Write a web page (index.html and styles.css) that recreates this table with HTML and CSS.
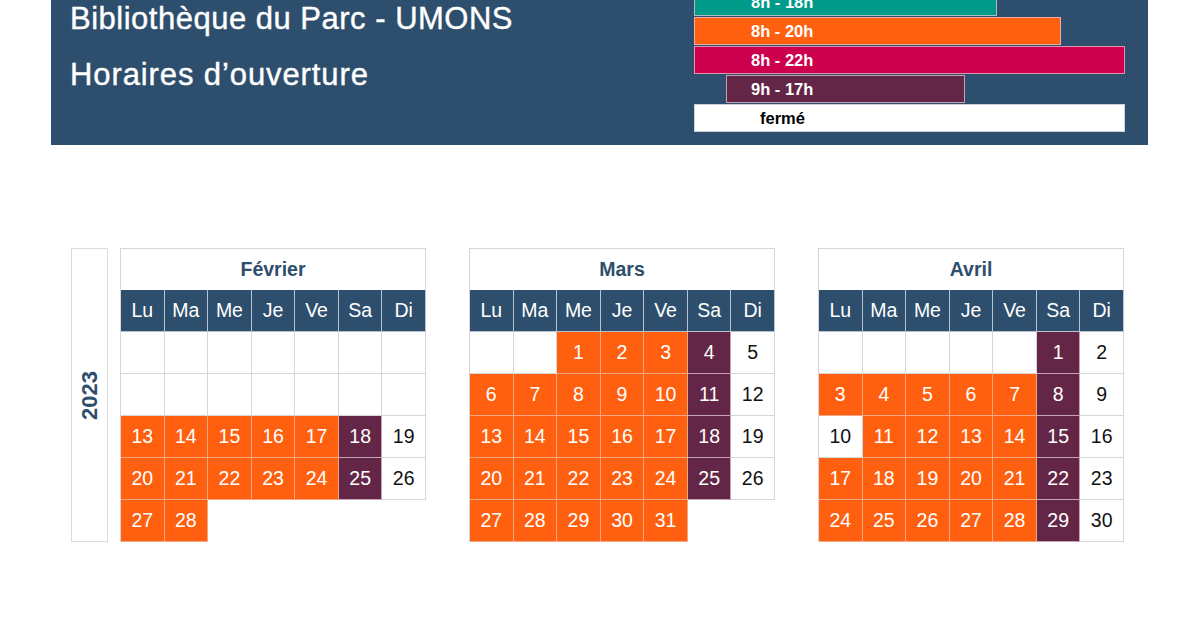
FILE: index.html
```html
<html>

<head>
    <meta charset="utf-8">
    <link rel="stylesheet" href="styles.css">
</head>

<body>
    <div class="banner">
        <div class="titles">
            <h1>Bibliothèque du Parc - UMONS</h1>
            <h2>Horaires d’ouverture</h2>
        </div>
        <div class="legend">
            <div class="bar teal" style="width: 303px">8h - 18h</div>
            <div class="bar orange" style="width: 367px">8h - 20h</div>
            <div class="bar crimson" style="width: 431px">8h - 22h</div>
            <div class="bar purple" style="margin-left: 32px; width: 239px">9h - 17h</div>
            <div class="bar closed" style="width: 431px">fermé</div>
        </div>
    </div>

    <div class="calendars">
        <div class="year"><span>2023</span></div>

        <!-- Février -->
        <div class="month">
            <div class="month-name">Février</div>
            <div class="grid">
                <div class="day-name">Lu</div><div class="day-name">Ma</div><div class="day-name">Me</div><div class="day-name">Je</div><div class="day-name">Ve</div><div class="day-name">Sa</div><div class="day-name">Di</div>
                <div class="cell"></div><div class="cell"></div><div class="cell"></div><div class="cell"></div><div class="cell"></div><div class="cell"></div><div class="cell"></div>
                <div class="cell"></div><div class="cell"></div><div class="cell"></div><div class="cell"></div><div class="cell"></div><div class="cell"></div><div class="cell"></div>
                <div class="cell o">13</div><div class="cell o">14</div><div class="cell o">15</div><div class="cell o">16</div><div class="cell o">17</div><div class="cell p">18</div><div class="cell">19</div>
                <div class="cell o">20</div><div class="cell o">21</div><div class="cell o">22</div><div class="cell o">23</div><div class="cell o">24</div><div class="cell p">25</div><div class="cell">26</div>
                <div class="cell o">27</div><div class="cell o">28</div>
            </div>
        </div>

        <!-- Mars -->
        <div class="month">
            <div class="month-name">Mars</div>
            <div class="grid">
                <div class="day-name">Lu</div><div class="day-name">Ma</div><div class="day-name">Me</div><div class="day-name">Je</div><div class="day-name">Ve</div><div class="day-name">Sa</div><div class="day-name">Di</div>
                <div class="cell"></div><div class="cell"></div><div class="cell o">1</div><div class="cell o">2</div><div class="cell o">3</div><div class="cell p">4</div><div class="cell">5</div>
                <div class="cell o">6</div><div class="cell o">7</div><div class="cell o">8</div><div class="cell o">9</div><div class="cell o">10</div><div class="cell p">11</div><div class="cell">12</div>
                <div class="cell o">13</div><div class="cell o">14</div><div class="cell o">15</div><div class="cell o">16</div><div class="cell o">17</div><div class="cell p">18</div><div class="cell">19</div>
                <div class="cell o">20</div><div class="cell o">21</div><div class="cell o">22</div><div class="cell o">23</div><div class="cell o">24</div><div class="cell p">25</div><div class="cell">26</div>
                <div class="cell o">27</div><div class="cell o">28</div><div class="cell o">29</div><div class="cell o">30</div><div class="cell o">31</div>
            </div>
        </div>

        <!-- Avril -->
        <div class="month">
            <div class="month-name">Avril</div>
            <div class="grid">
                <div class="day-name">Lu</div><div class="day-name">Ma</div><div class="day-name">Me</div><div class="day-name">Je</div><div class="day-name">Ve</div><div class="day-name">Sa</div><div class="day-name">Di</div>
                <div class="cell"></div><div class="cell"></div><div class="cell"></div><div class="cell"></div><div class="cell"></div><div class="cell p">1</div><div class="cell">2</div>
                <div class="cell o">3</div><div class="cell o">4</div><div class="cell o">5</div><div class="cell o">6</div><div class="cell o">7</div><div class="cell p">8</div><div class="cell">9</div>
                <div class="cell">10</div><div class="cell o">11</div><div class="cell o">12</div><div class="cell o">13</div><div class="cell o">14</div><div class="cell p">15</div><div class="cell">16</div>
                <div class="cell o">17</div><div class="cell o">18</div><div class="cell o">19</div><div class="cell o">20</div><div class="cell o">21</div><div class="cell p">22</div><div class="cell">23</div>
                <div class="cell o">24</div><div class="cell o">25</div><div class="cell o">26</div><div class="cell o">27</div><div class="cell o">28</div><div class="cell p">29</div><div class="cell">30</div>
            </div>
        </div>
    </div>
</body>

</html>
```

FILE: styles.css
```css
body {
    margin: 0;
    background: #fff;
    font-family: "Liberation Sans", Arial, sans-serif;
    overflow: hidden;
}

/* bandeau du haut */
.banner {
    display: flex;
    margin-left: 51px;
    width: 1097px;
    height: 145px;
    background: #2d4e6c;
    overflow: hidden;
}

.titles {
    padding-left: 19px;
    margin-top: -9px;
    color: #fff;
}

.titles h1,
.titles h2 {
    margin: 0;
    font-size: 31px;
    font-weight: normal;
    line-height: 56px;
    letter-spacing: 0.5px;
    -webkit-text-stroke: 0.4px #fff;
}

.titles h2 {
    letter-spacing: 0.9px;
}

.legend {
    display: flex;
    flex-direction: column;
    gap: 1px;
    margin-left: auto;
    margin-right: 23px;
    margin-top: -12px;
    width: 431px;
}

.bar {
    box-sizing: border-box;
    height: 28px;
    line-height: 26px;
    padding-left: 56px;
    border: 1px solid rgba(230, 200, 215, 0.75);
    color: #fff;
    font-size: 16.5px;
    font-weight: bold;
}

.teal {
    background: #009a8a;
}

.orange {
    background: #ff6010;
}

.crimson {
    background: #cc004c;
}

.purple {
    background: #642646;
    padding-left: 24px;
}

.closed {
    background: #fff;
    color: #000;
    padding-left: 65px;
    border-color: #c9d3de;
}

/* calendriers */
.calendars {
    display: flex;
    margin-top: 103px;
    margin-left: 71px;
}

.year {
    box-sizing: border-box;
    width: 37px;
    height: 294px;
    border: 1px solid #dcdcdc;
    display: flex;
    align-items: center;
    justify-content: center;
    margin-right: 12px;
}

.year span {
    writing-mode: vertical-rl;
    transform: rotate(180deg);
    color: #2d4e6c;
    font-weight: bold;
    font-size: 22px;
}

.month {
    width: 306px;
    margin-right: 43px;
}

.month-name {
    box-sizing: border-box;
    height: 42px;
    border: 1px solid #d6d6d6;
    border-bottom: none;
    display: flex;
    align-items: center;
    justify-content: center;
    color: #2d4e6c;
    font-weight: bold;
    font-size: 19.5px;
}

.grid {
    display: grid;
    grid-template-columns: repeat(7, 1fr);
    grid-auto-rows: 42px;
    border-left: 1px solid #d6d6d6;
}

.day-name,
.cell {
    box-sizing: border-box;
    display: flex;
    align-items: center;
    justify-content: center;
    font-size: 19.5px;
    border-right: 1px solid #d6d6d6;
    border-bottom: 1px solid #d6d6d6;
}

.day-name {
    background: #2d4e6c;
    color: #fff;
    border-color: #b8c3cf;
}

.cell {
    color: #111;
}

.cell.o {
    background: #ff6010;
    color: #fff;
    border-color: #f2a77f;
}

.cell.p {
    background: #642646;
    color: #fff;
    border-color: #c9a3b3;
}
```
